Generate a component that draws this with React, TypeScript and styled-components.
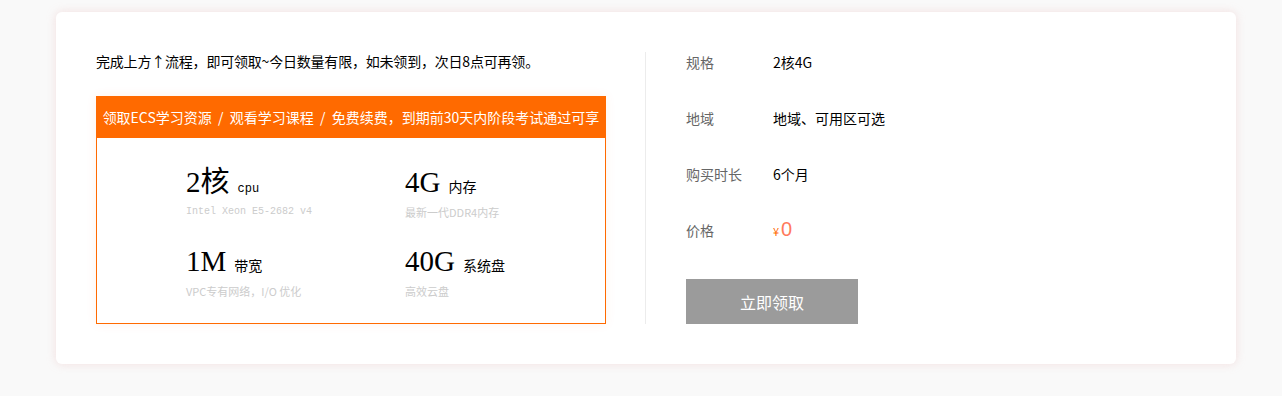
import React, {FC, ReactElement} from 'react';
import styled, {createGlobalStyle} from 'styled-components';

const GlobalStyle = createGlobalStyle`
  html, body {
    margin: 0;
    padding: 0;
    background: #f9f9f9;
    font-family: "Noto Sans CJK SC", "Noto Sans", sans-serif;
    color: #000;
  }
`;

const Page = styled.div`
  padding: 12px 46px 28px 56px;
`;

const Card = styled.div`
  width: 1180px;
  box-sizing: border-box;
  background: #fff;
  border-radius: 6px;
  box-shadow: 0 0 10px rgba(235, 185, 185, 0.4);
  padding: 40px 40px 40px 40px;
  display: flex;
  align-items: stretch;
`;

const LeftColumn = styled.div`
  width: 510px;
  flex-shrink: 0;
`;

const Intro = styled.div`
  font-size: 14px;
  line-height: 18px;
  height: 20px;
  margin-bottom: 24px;
  white-space: nowrap;
  letter-spacing: -0.2px;
`;

const OfferBox = styled.div`
  border: 1px solid #ff6a00;
  box-shadow: 0 0 10px rgba(255, 106, 0, 0.08);
`;

const OfferHeader = styled.div`
  background: #ff6a00;
  color: #fff;
  height: 41px;
  line-height: 41px;
  font-size: 14px;
  text-align: center;
  white-space: pre;
  overflow: hidden;
`;

const SpecGrid = styled.div`
  display: grid;
  grid-template-columns: 219px 1fr;
  row-gap: 23px;
  padding: 26px 0 24px 89px;
`;

const Spec = styled.div`
  display: flex;
  flex-direction: column;
`;

const SpecMain = styled.div`
  display: flex;
  align-items: baseline;
  height: 34px;
  line-height: 36px;
`;

const SpecValue = styled.span`
  font-family: "Liberation Serif", "Noto Sans CJK SC", serif;
  font-size: 29px;
`;

const SpecUnit = styled.span<{ $mono?: boolean }>`
  font-family: ${p => p.$mono ? '"Liberation Mono", monospace' : '"Noto Sans CJK SC", sans-serif'};
  font-size: ${p => p.$mono ? '12px' : '14px'};
  margin-left: 8px;
`;

const SpecNote = styled.div<{ $mono?: boolean }>`
  margin-top: 6px;
  font-family: ${p => p.$mono ? '"Liberation Mono", "Noto Sans CJK SC", monospace' : '"Noto Sans CJK SC", sans-serif'};
  font-size: ${p => p.$mono ? '10px' : '11px'};
  line-height: 16px;
  color: #ccc;
  white-space: nowrap;
`;

const Divider = styled.div`
  width: 1px;
  background: #ececec;
  margin: 0 40px 0 39px;
`;

const RightColumn = styled.div`
  display: flex;
  flex-direction: column;
`;

const InfoRow = styled.div`
  display: flex;
  align-items: center;
  height: 20px;
  line-height: 16px;
  margin-bottom: 36px;
  font-size: 14px;
`;

const InfoLabel = styled.span`
  width: 87px;
  color: #666;
`;

const InfoValue = styled.span`
  color: #000;
`;

const Currency = styled.span`
  color: #ff6a00;
  font-size: 11px;
  margin-right: 2px;
`;

const Amount = styled.span`
  font-family: "Liberation Sans", sans-serif;
  color: #ff7a5c;
  font-size: 20px;
  font-weight: 300;
`;

const ClaimButton = styled.button`
  margin-top: 3px;
  width: 172px;
  height: 45px;
  border: none;
  background: #9b9b9b;
  color: #fff;
  font-family: "Noto Sans CJK SC", sans-serif;
  font-size: 16px;
  cursor: not-allowed;
`;

type SpecItem = {
  value: string
  unit: string
  note: string
  monoUnit?: boolean
  monoNote?: boolean
}

const specs: SpecItem[] = [
  {value: '2核', unit: 'cpu', note: 'Intel Xeon E5-2682 v4', monoUnit: true, monoNote: true},
  {value: '4G', unit: '内存', note: '最新一代DDR4内存'},
  {value: '1M', unit: '带宽', note: 'VPC专有网络，I/O 优化'},
  {value: '40G', unit: '系统盘', note: '高效云盘'},
];

const info = [
  {label: '规格', value: '2核4G'},
  {label: '地域', value: '地域、可用区可选'},
  {label: '购买时长', value: '6个月'},
];

const App: FC = (): ReactElement => {
  return (
      <Page>
        <GlobalStyle/>
        <Card>
          <LeftColumn>
            <Intro>完成上方↑流程，即可领取~今日数量有限，如未领到，次日8点可再领。</Intro>
            <OfferBox>
              <OfferHeader>领取ECS学习资源  /  观看学习课程  /  免费续费，到期前30天内阶段考试通过可享</OfferHeader>
              <SpecGrid>
                {specs.map(s => (
                    <Spec key={s.value}>
                      <SpecMain>
                        <SpecValue>{s.value}</SpecValue>
                        <SpecUnit $mono={s.monoUnit}>{s.unit}</SpecUnit>
                      </SpecMain>
                      <SpecNote $mono={s.monoNote}>{s.note}</SpecNote>
                    </Spec>
                ))}
              </SpecGrid>
            </OfferBox>
          </LeftColumn>
          <Divider/>
          <RightColumn>
            {info.map(row => (
                <InfoRow key={row.label}>
                  <InfoLabel>{row.label}</InfoLabel>
                  <InfoValue>{row.value}</InfoValue>
                </InfoRow>
            ))}
            <InfoRow>
              <InfoLabel>价格</InfoLabel>
              <InfoValue>
                <Currency>¥</Currency>
                <Amount>0</Amount>
              </InfoValue>
            </InfoRow>
            <ClaimButton>立即领取</ClaimButton>
          </RightColumn>
        </Card>
      </Page>
  );
}

export default App;
